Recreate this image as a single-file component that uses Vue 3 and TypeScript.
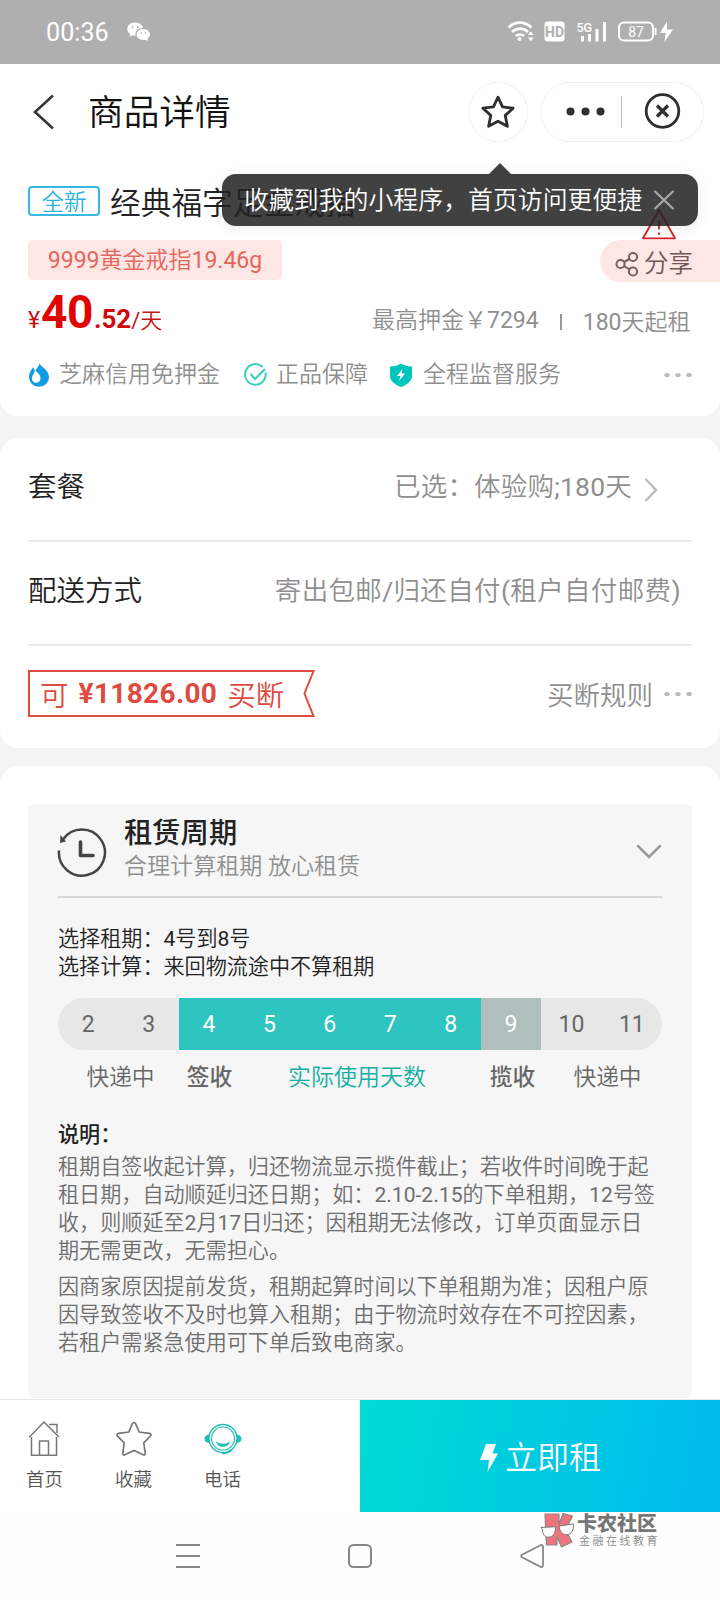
<script setup lang="ts">
interface Day {
  n: number
  kind: 'idle' | 'use' | 'back'
}

const days: Day[] = Array.from({ length: 10 }, (_, i) => {
  const n = i + 2
  return { n, kind: n >= 4 && n <= 8 ? 'use' : n === 9 ? 'back' : 'idle' }
})

const rules: string[][] = [
  [
    '租期自签收起计算，归还物流显示揽件截止；若收件时间晚于起',
    '租日期，自动顺延归还日期；如：2.10-2.15的下单租期，12号签',
    '收，则顺延至2月17日归还；因租期无法修改，订单页面显示日',
    '期无需更改，无需担心。',
  ],
  [
    '因商家原因提前发货，租期起算时间以下单租期为准；因租户原',
    '因导致签收不及时也算入租期；由于物流时效存在不可控因素，',
    '若租户需紧急使用可下单后致电商家。',
  ],
]
</script>

<template>
  <div class="page" lang="zh-CN">
    <header class="status">
      <span class="clock">00:36</span>
      <svg class="wechat" width="24" height="20" viewBox="0 0 24 20">
        <path fill="#fff" d="M8.2.5C3.7.5.3 3.400.3 7c0 2.100 1.100 3.900 2.900 5.100L2.500 14.800l3-1.500c.8.200 1.700.4 2.600.4h.4C7.600 9.200 11.200 5.800 16 5.900 15.200 2.700 12.200.5 8.200.5z" />
        <path fill="#fff" d="M23 12.600c0-3-3-5.500-6.700-5.500s-6.700 2.500-6.700 5.500 3 5.500 6.700 5.500c.8 0 1.600-.1 2.300-.3l2.500 1.200-.6-2.200c1.500-1 2.500-2.500 2.500-4.200z" />
        <g fill="#afafaf"><circle cx="5.600" cy="5" r=".9" /><circle cx="10.700" cy="5" r=".9" /><circle cx="14.200" cy="11" r=".8" /><circle cx="18.500" cy="11" r=".8" /></g>
      </svg>
      <svg class="sys" width="168" height="24" viewBox="0 0 168 24">
        <g fill="none" stroke="#fff" stroke-width="2.600">
          <path d="M1.500 7.500C8 1 17.500 1 24.500 7.500" /><path d="M5 12c5-4.500 11.500-4.500 16 0" /><path d="M8.800 16c2.500-2 6-2 8.400 0" />
        </g>
        <circle cx="12.500" cy="19" r="2" fill="#fff" />
        <path fill="#fff" d="M21 15l2.800-4 2.800 4zM21 17.500l2.800 4 2.800-4z" />
        <rect x="37.500" y="1.500" width="20" height="20" rx="3" fill="#fff" />
        <text x="47.500" y="16.800" class="hd" text-anchor="middle">HD</text>
        <text x="69.500" y="12" class="g5">5G</text>
        <g fill="#fff"><rect x="74" y="16" width="3" height="5.500" /><rect x="81" y="14" width="3" height="7.500" /><rect x="88.500" y="9" width="3" height="12.500" /><rect x="96" y="2" width="3" height="19.500" /></g>
        <rect x="112" y="2.500" width="34" height="18" rx="5" fill="none" stroke="#fff" stroke-width="2" />
        <path d="M148.500 8v7" stroke="#fff" stroke-width="2" />
        <text x="129" y="16.500" class="bat" text-anchor="middle">87</text>
        <path fill="#fff" d="M160 1.500L153 13h5.500l-1 9 8.500-12.500h-6z" />
      </svg>
    </header>

    <nav class="bar">
      <svg class="back" width="22" height="36" viewBox="0 0 22 36"><path d="M20 1.500L2 18l18 16.500" fill="none" stroke="#333" stroke-width="2.500" /></svg>
      <h1>商品详情</h1>
      <span class="round">
        <svg width="36" height="36" viewBox="0 0 36 36"><path d="M18 3.200l4.500 9.700 10.600 1.300-7.900 7.200 2.200 10.900L18 27.200l-9.400 5.100 2.200-10.900-7.900-7.200 10.600-1.300z" fill="none" stroke="#2f2f2f" stroke-width="2.800" stroke-linejoin="round" /></svg>
      </span>
      <span class="capsule">
        <svg width="162" height="58" viewBox="0 0 162 58">
          <g fill="#2f2f2f"><circle cx="29.500" cy="28.500" r="4" /><circle cx="44.500" cy="28.500" r="4" /><circle cx="59.500" cy="28.500" r="4" /></g>
          <path d="M80.500 13v32" stroke="#bbb" />
          <circle cx="121.500" cy="28" r="16.300" fill="none" stroke="#2f2f2f" stroke-width="2.800" />
          <path d="M116 22.500l11 11M127 22.500l-11 11" stroke="#2f2f2f" stroke-width="3.200" />
        </svg>
      </span>
    </nav>

    <section class="card product">
      <div class="name-row">
        <span class="new">全新</span>
        <span class="name">经典福字足金戒指</span>
        <svg class="warn" width="36" height="32" viewBox="0 0 36 32"><path d="M18 2L34 30.300H2z" fill="none" stroke="#d8202c" stroke-width="1.800" stroke-linejoin="round" /><path d="M18 12.500v9M18 24.500v2.500" stroke="#d8202c" stroke-width="1.800" /></svg>
        <div class="tip">
          <svg class="arrow" width="22" height="11" viewBox="0 0 22 11"><path d="M0 11L11 0l11 11z" fill="#404040" /></svg>
          <span>收藏到我的小程序，首页访问更便捷</span>
          <svg width="22" height="20" viewBox="0 0 22 20"><path d="M1.500 1l19 18M20.500 1l-19 18" stroke="#aaa" stroke-width="2" /></svg>
        </div>
      </div>
      <div class="tag-row">
        <span class="tag">9999黄金戒指19.46g</span>
        <span class="share">
          <svg width="24" height="26" viewBox="0 0 24 26"><g fill="none" stroke="#75605e" stroke-width="2"><circle cx="5.500" cy="13" r="4.100" /><circle cx="18" cy="6" r="4.100" /><circle cx="18" cy="20.500" r="4.100" /><path d="M9 11l5.500-3M9 15l5.500 3.500" /></g></svg>
          分享
        </span>
      </div>
      <div class="price-row">
        <span class="price"><i>¥</i><b class="int">40</b><b class="dec">.52</b><i class="unit">/天</i></span>
        <span class="deposit">最高押金￥7294</span>
        <span class="sep"></span>
        <span class="lease">180天起租</span>
      </div>
      <div class="serve-row">
        <svg class="s1" width="22" height="24" viewBox="0 0 22 24"><path fill="#0f9be6" d="M11.500.5C12 3 21 7 21 14a10 9.800 0 0 1-20 0C1 9.500 3.800 6.500 5 4.200c1 1 1 2 1.500 3.300C8.500 6 11 3.500 11.500.5z" /><path fill="#fff" d="M7 6.500c1 2.500 6 5 5.500 9a4.300 4.300 0 0 1-8.600 0C4 12 7 10 7 6.500z" /></svg>
        <span class="t1">芝麻信用免押金</span>
        <svg class="s2" width="24" height="24" viewBox="0 0 24 24"><g fill="none" stroke="#3fcfbd" stroke-width="2"><path d="M21.500 9.500A10.300 10.300 0 1 1 18.500 4" /><path d="M6.500 11l4.500 5L21 6" stroke-width="2.200" /></g></svg>
        <span class="t2">正品保障</span>
        <svg class="s3" width="22" height="24" viewBox="0 0 22 24"><path fill="#00c5bd" d="M11 .5c3 2 6.500 2.800 11 3V13c0 5.500-5.500 9-11 11C5.500 22 0 18.500 0 13V3.500c4.500-.2 8-1 11-3z" /><path fill="#fff" d="M12.500 6L7 13h3.500L9 18l6-7.500h-3.500z" /></svg>
        <span class="t3">全程监督服务</span>
        <svg class="more" width="28" height="6" viewBox="0 0 28 6"><g fill="#bbb"><ellipse cx="3" cy="3" rx="2.800" ry="2" /><ellipse cx="14" cy="3" rx="2.800" ry="2" /><ellipse cx="25" cy="3" rx="2.800" ry="2" /></g></svg>
      </div>
    </section>

    <section class="card options">
      <div class="opt">
        <span class="label">套餐</span>
        <span class="value v1">已选：体验购;180天</span>
        <svg class="chev" width="14" height="24" viewBox="0 0 14 24"><path d="M1.500 1l10.500 11L1.500 23" fill="none" stroke="#bbb" stroke-width="2.400" /></svg>
      </div>
      <div class="opt">
        <span class="label">配送方式</span>
        <span class="value v2">寄出包邮/归还自付(租户自付邮费)</span>
      </div>
      <div class="opt buy">
        <span class="ribbon">
          <svg width="288" height="48" viewBox="0 0 288 48"><path d="M1 1h284.500l-9 22.500 9 22.500H1z" fill="none" stroke="#de4b40" stroke-width="2" /></svg>
          <span class="can">可</span><b>¥11826.00</b><span>买断</span>
        </span>
        <span class="value v3">买断规则</span>
        <svg class="more" width="28" height="6" viewBox="0 0 28 6"><g fill="#bbb"><ellipse cx="3" cy="3" rx="2.800" ry="2" /><ellipse cx="14" cy="3" rx="2.800" ry="2" /><ellipse cx="25" cy="3" rx="2.800" ry="2" /></g></svg>
      </div>
    </section>

    <section class="card cycle">
      <div class="panel">
        <div class="head">
          <svg class="history" width="50" height="50" viewBox="0 0 50 50">
            <path d="M2 23.500A23 23 0 1 0 6 12.500" fill="none" stroke="#444" stroke-width="2.500" />
            <path d="M3.500 8l-.5 8 6-1.500z" fill="#444" />
            <path d="M23.500 15v13.500H36" fill="none" stroke="#444" stroke-width="3.600" stroke-linecap="round" stroke-linejoin="round" />
          </svg>
          <div class="titles"><h2>租赁周期</h2><p>合理计算租期 放心租赁</p></div>
          <svg class="fold" width="26" height="16" viewBox="0 0 26 16"><path d="M2 2l11 11L24 2" fill="none" stroke="#999" stroke-width="2.500" stroke-linecap="round" /></svg>
        </div>
        <div class="picked"><p>选择租期：4号到8号</p><p>选择计算：来回物流途中不算租期</p></div>
        <div class="days"><span v-for="d in days" :key="d.n" :class="d.kind">{{ d.n }}</span></div>
        <div class="legend">
          <span>快递中</span><b>签收</b><span class="mid">实际使用天数</span><b>揽收</b><span class="last">快递中</span>
        </div>
        <div class="rules">
          <h3>说明：</h3>
          <div v-for="(group, i) in rules" :key="i" class="group"><p v-for="line in group" :key="line">{{ line }}</p></div>
        </div>
      </div>
    </section>

    <footer class="actions">
      <div class="tabs">
        <span class="tab">
          <svg width="32" height="38" viewBox="0 0 32 38"><g fill="none" stroke="#777" stroke-width="1.500"><path d="M0 17.500L15 2l15 15" /><path d="M2.500 17v18.200H27.500V17" /><path d="M10.500 35V21h9v14" /><path d="M20 4.500h8V13" /></g></svg>
          首页
        </span>
        <span class="tab">
          <svg width="38" height="38" viewBox="0 0 38 38"><path d="M19 2.500c.7 0 1.300.5 1.600 1.200l3.600 8.300 10.200 1.300c1.700.3 2.200 1.700 1 2.900l-6.600 6.600 1.400 10.600c.2 1.500-.9 2-2 1.400L19 30.500l-9.200 4.300c-1.200.6-2.200 0-2-1.400l1.400-10.600-6.600-6.600c-1.200-1.200-.7-2.600 1-2.900L13.800 12l3.600-8.300c.3-.7.900-1.200 1.600-1.200z" fill="none" stroke="#777" stroke-width="1.700" /></svg>
          收藏
        </span>
        <span class="tab">
          <svg width="38" height="38" viewBox="0 0 38 38"><g fill="none" stroke="#22bdb5"><circle cx="19" cy="18.500" r="14" stroke-width="1.400" /><circle cx="19" cy="18.500" r="11.500" stroke-width="1.200" /><path d="M18 33.200c3.500.3 7-1 9.500-3.200" stroke-width="1.800" /></g><path fill="#22bdb5" d="M12 21.500c4 3 10 3 14 0-1 7-13 7-14 0zM5 14.500v8.500c-6-1-6-7.500 0-8.500zM33 14.500v8.500c6-1 6-7.500 0-8.500z" /></svg>
          电话
        </span>
      </div>
      <div class="rent">
        <svg width="20" height="28" viewBox="0 0 20 28"><path fill="#fff" d="M7 0h10l-3.500 9.500H19L8.500 28l1.500-12H1z" /></svg>
        <span>立即租</span>
      </div>
    </footer>

    <div class="sysnav">
      <svg width="26" height="26" viewBox="0 0 26 26"><path d="M1 2h24M1 13h24M1 24h24" stroke="#888" stroke-width="2" /></svg>
      <svg width="26" height="26" viewBox="0 0 26 26"><rect x="2" y="2" width="22" height="22" rx="4.500" fill="none" stroke="#888" stroke-width="2" /></svg>
      <svg width="26" height="26" viewBox="0 0 26 26"><path d="M22 2L2.500 12Q1.500 13 2.500 14L22 24Q24 24 24 22.500V3.500Q24 2 22 2z" fill="none" stroke="#888" stroke-width="1.800" /></svg>
      <div class="brand">
        <svg width="36" height="36" viewBox="0 0 36 36">
          <path d="M5 2h14v10.500L23 1.500 32.500 4 25.500 18l6.500 12-10.500 5-4.500-10.500V33H6.500z" fill="#f0747e" stroke="#888" stroke-width="1.200" stroke-linejoin="round" />
          <path d="M.8 15.500l14.700-.8c.5 6-2.500 10.500-7 10.500S2.500 22 2.500 17zM19 14L33.500 12c.3 6-2 10.500-6.500 10.800S19.500 19 19 14z" fill="#fff" stroke="#777" stroke-width="1" stroke-linejoin="round" />
        </svg>
        <div><b>卡农社区</b><small>金融在线教育</small></div>
      </div>
    </div>
  </div>
</template>

<style>
body { margin: 0; background: #fff; }
</style>

<style scoped>
* { box-sizing: border-box; }
.page { width: 720px; height: 1600px; overflow: hidden; display: flex; flex-direction: column; background: #f4f4f4; font-family: Roboto, "Noto Sans CJK SC DemiLight", "Noto Sans CJK SC", sans-serif; color: #333; font-weight: 400; position: relative; white-space: nowrap; }
svg { display: block; flex: none; }
h1, h2, h3, p { margin: 0; font-weight: inherit; }
h2, h3, b { font-family: Roboto, "Noto Sans CJK SC", sans-serif; }
.status { flex: none; height: 64px; background: #afafaf; display: flex; align-items: center; padding-left: 46px; color: #fff; }
.clock { font-size: 25.2px; width: 81px; }
.sys { margin-left: 356px; }
.hd { font: 700 14px Roboto; fill: #afafaf; }
.g5 { font: 500 12.500px Roboto; fill: #fff; }
.bat { font: 400 14px Roboto; fill: #fff; }

.bar { flex: none; height: 96px; background: #fff; display: flex; align-items: center; padding: 0 16px 0 33px; }
.bar h1 { font-size: 35.700px; line-height: 50px; margin-left: 33px; padding-top: 1px; flex: 1; color: #111; }
.round { width: 60px; height: 60px; border: 1px solid #f1f1f1; border-radius: 50%; display: grid; place-items: center; margin-right: 12px; }
.capsule { width: 164px; height: 60px; border: 1px solid #f1f1f1; border-radius: 30px; }

.card { flex: none; background: #fff; border-radius: 18px; }
.product { height: 256px; border-radius: 0 0 18px 18px; padding: 24px 0 0 28px; }
.name-row { position: relative; height: 40px; display: flex; align-items: center; }
.new { width: 72px; height: 30px; border: 2px solid #38b8e0; border-radius: 4px; color: #2bb3dc; font-size: 22.500px; line-height: 29px; text-align: center; margin-top: -6px; }
.name { font-size: 30.700px; line-height: 40px; margin-left: 10px; padding-top: 0; color: #222; }
.warn { position: absolute; left: 613px; top: 24px; }
.tip { position: absolute; left: 194px; top: -10px; width: 476px; height: 52px; border-radius: 14px; background: rgba(34, 34, 34, 0.86); color: #fff; font-size: 24.900px; display: flex; align-items: center; padding: 0 23px 0 22px; justify-content: space-between; box-shadow: 0 2px 14px rgba(0, 0, 0, 0.08); }
.tip span { padding-bottom: 4px; }
.arrow { position: absolute; left: 267px; top: -11px; }
.tag-row { margin-top: 16px; display: flex; justify-content: space-between; height: 42px; align-items: flex-start; }
.tag { width: 254px; height: 40px; border-radius: 5px; background: #fee6e4; color: #e2675c; font-size: 23px; line-height: 41px; text-align: center; }
.share { width: 120px; height: 42px; border-radius: 21px 0 0 21px; background: #fee6e4; color: #6e5755; font-size: 24.500px; line-height: 39px; display: flex; align-items: center; padding: 5px 0 0 15px; gap: 5px; }
.price-row { display: flex; height: 86px; align-items: baseline; color: #8f8f8f; font-size: 23px; line-height: 60px; }
.price { color: #e00505; width: 344px; display: flex; align-items: baseline; }
.price i { font-style: normal; font-size: 23px; color: #c41313; }
.price b { font-weight: 700; }
.price .int { font-size: 46px; margin-left: 1px; letter-spacing: -0.5px; }
.price .dec { font-size: 26px; margin-left: 1px; color: #cf0a0a; }
.price .unit { font-size: 22px; }
.sep { width: 2px; height: 16px; background: #999; margin: 32px 21px 0 21px; align-self: flex-start; }
.lease { position: relative; top: 2px; }
.serve-row { display: flex; height: 24px; align-items: center; color: #8f8f8f; font-size: 23px; line-height: 24px; margin-top: -5px; }
.t1 { margin-left: 9px; width: 185px; }
.t2 { margin-left: 8px; width: 114px; }
.t3 { margin-left: 11px; width: 241px; }
.more { margin-right: 28px; }

.options { margin-top: 22px; height: 310px; padding: 0 28px; }
.opt { height: 104px; border-bottom: 2px solid #ebebeb; display: flex; align-items: center; padding-bottom: 9px; }
.opt:last-child { border: 0; }
.label { font-size: 28.500px; flex: 1; color: #222; }
.value { color: #8f8f8f; font-size: 26.500px; }
.v1 { margin-right: 12px; letter-spacing: 0.2px; }
.chev { margin-right: 34px; margin-top: 11px; }
.v2 { margin-right: 11px; letter-spacing: 0.35px; }
.v3 { margin-right: 11px; margin-left: auto; }
.buy .more { margin: 0; }
.ribbon { position: relative; width: 288px; height: 48px; display: flex; align-items: center; padding-left: 12px; color: #de4b40; font-size: 28.500px; }
.ribbon svg { position: absolute; left: 0; top: 0; }
.ribbon b { font-size: 28px; letter-spacing: 0.35px; font-weight: 700; margin: 0 10px; }

.cycle { margin-top: 18px; height: 633px; border-radius: 18px 18px 0 0; padding: 38px 28px 0; }
.panel { height: 594px; background: #f6f6f6; border-radius: 6px; padding: 0 30px; }
.head { height: 94px; border-bottom: 2px solid #d8d8d8; display: flex; align-items: center; }
.history { margin: 3px 0 0 -1px; }
.fold { margin-top: 3px; }
.titles { flex: 1; margin-left: 17px; }
.titles h2 { font-size: 28.300px; line-height: 34px; font-weight: 500; color: #222; }
.titles p { font-size: 23.050px; line-height: 32px; color: #8f8f8f; }
.picked { padding-top: 27px; font-size: 21.100px; line-height: 28px; color: #222; height: 100px; }
.days { display: flex; height: 52px; border-radius: 26px; overflow: hidden; background: #e7e7e7; }
.days span { flex: 1; text-align: center; line-height: 53px; font-size: 23px; color: #666; }
.days .use { background: #2ec4c0; color: #fff; }
.days .back { background: #b0bebc; color: #fff; }
.legend { display: grid; grid-template-columns: 125px 53px 242px 69px 115px; font-size: 22.700px; line-height: 56px; height: 54px; text-align: center; color: #666; }
.legend b { font-weight: 500; }
.legend .mid { color: #12b0a2; font-size: 23px; }
.legend .last { padding-left: 6px; }
.rules { font-size: 21.100px; line-height: 28px; color: #6d6d6d; margin-top: 17px; }
.rules h3 { font-size: 21.100px; font-weight: 500; color: #222; margin-bottom: 4px; }
.group { margin-bottom: 8px; }

.actions { flex: none; height: 113px; border-top: 1px solid #e6e6e6; background: #fff; display: flex; }
.tabs { width: 360px; display: flex; padding: 20px 0 0; }
.tab { width: 89px; display: flex; flex-direction: column; align-items: center; font-size: 18.500px; line-height: 30px; gap: 7px; color: #555; }
.rent { flex: 1; background: linear-gradient(100deg, #00dcd4, #00b9ee); display: flex; align-items: center; justify-content: center; gap: 6px; color: #fff; font-size: 32px; }
.rent svg { margin-top: 3px; }
.rent span { padding-bottom: 2px; }
.sysnav { flex: 1; background: #fefefe; position: relative; display: flex; gap: 146px; padding: 31px 0 0 175px; }
.brand { position: absolute; left: 540px; top: 0; display: flex; gap: 1px; }
.brand b { display: block; font-size: 20px; line-height: 25px; font-weight: 900; color: #777; }
.brand small { display: block; font-size: 11px; line-height: 9px; letter-spacing: 2.500px; padding-left: 2px; color: #888; }
</style>
